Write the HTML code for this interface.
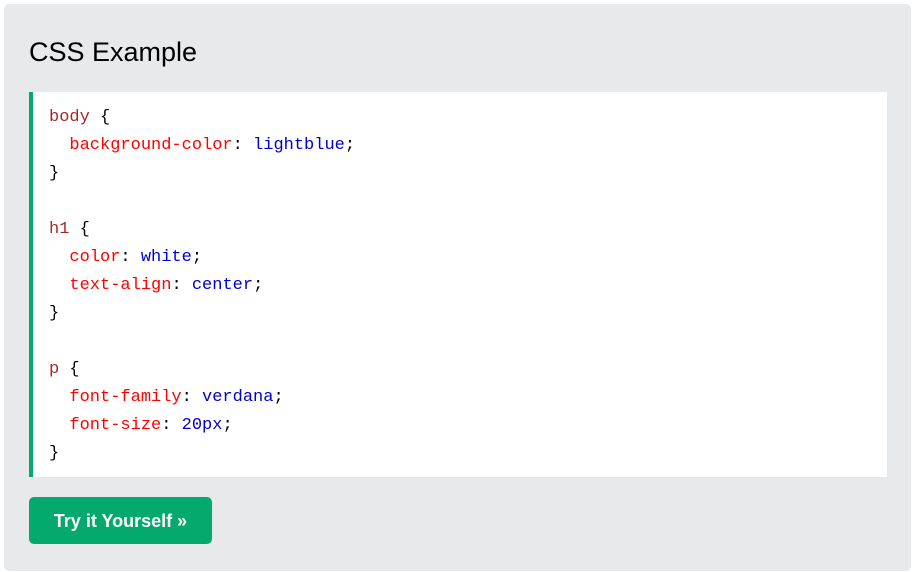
<!DOCTYPE html>
<html><head><style>
body{margin:0;background:#fff;width:915px;height:572px;overflow:hidden;font-family:"Liberation Sans",sans-serif}
.box{position:absolute;left:4px;top:4px;width:907px;height:567px;background:#E7E9EB;border-radius:5px}
h2{position:absolute;left:25px;top:32px;margin:0;font-weight:normal;font-size:27px;line-height:32px;color:#000}
.code{position:absolute;left:25px;top:88px;width:838px;background:#fff;border-left:4px solid #04AA6D;padding:12px 0 8px 16px;font-family:"Liberation Mono",monospace;font-size:17px;line-height:28px;color:#000;white-space:pre;height:365px}
.s{color:#a52a2a}.p{color:red}.v{color:mediumblue}
.btn{position:absolute;left:25px;top:493px;width:183px;height:47px;background:#04AA6D;border-radius:5px;color:#fff;font-weight:bold;font-size:18px;line-height:49px;text-align:center}
</style></head><body>
<div class="box">
<h2>CSS Example</h2>
<div class="code"><span class="s">body</span> {
  <span class="p">background-color</span>: <span class="v">lightblue</span>;
}

<span class="s">h1</span> {
  <span class="p">color</span>: <span class="v">white</span>;
  <span class="p">text-align</span>: <span class="v">center</span>;
}

<span class="s">p</span> {
  <span class="p">font-family</span>: <span class="v">verdana</span>;
  <span class="p">font-size</span>: <span class="v">20px</span>;
}</div>
<div class="btn">Try it Yourself »</div>
</div>
</body></html>
